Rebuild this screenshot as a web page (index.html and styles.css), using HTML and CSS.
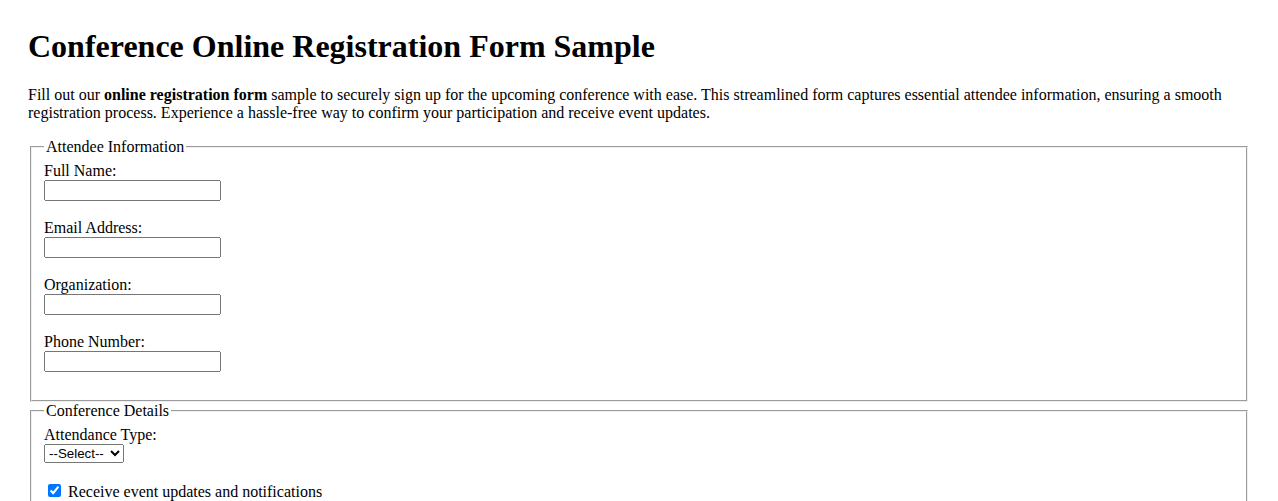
FILE: index.html
```html
<!DOCTYPE html>
<html lang="en">
<head>
<meta charset="utf-8">
<title>Conference Online Registration Form Sample</title>
<link rel="stylesheet" href="styles.css">
</head>
<body>
<div class="page">
<h1 class="title">Conference Online Registration Form Sample</h1>
<p class="intro">Fill out our <strong>online registration form</strong> sample to securely sign up for the upcoming conference with ease. This streamlined form captures essential attendee information, ensuring a smooth registration process. Experience a hassle-free way to confirm your participation and receive event updates.</p>
<form class="form">
<fieldset class="group">
<legend>Attendee Information</legend>
<label for="name">Full Name:</label><br>
<input class="text-input" type="text" id="name"><br><br>
<label for="email">Email Address:</label><br>
<input class="text-input" type="email" id="email"><br><br>
<label for="org">Organization:</label><br>
<input class="text-input" type="text" id="org"><br><br>
<label for="phone">Phone Number:</label><br>
<input class="text-input" type="tel" id="phone"><br><br>
</fieldset>
<fieldset class="group">
<legend>Conference Details</legend>
<label for="type">Attendance Type:</label><br>
<select class="select" id="type">
<option>--Select--</option>
<option>In-person</option>
<option>Virtual</option>
</select><br><br>
<input type="checkbox" id="updates" checked>
<label for="updates">Receive event updates and notifications</label><br><br>
</fieldset>
</form>
</div>
</body>
</html>
```
FILE: styles.css
```css
body {
  margin: 8px;
  font-family: "Liberation Serif", "Times New Roman", serif;
}
.page {
  padding: 20px;
}
.title {
  margin-top: 0;
}
.text-input {
  width: 177px;
  height: 21px;
  box-sizing: border-box;
  font-family: "Liberation Sans", Arial, sans-serif;
}
.select {
  width: 80px;
  font-family: "Liberation Sans", Arial, sans-serif;
}
```
